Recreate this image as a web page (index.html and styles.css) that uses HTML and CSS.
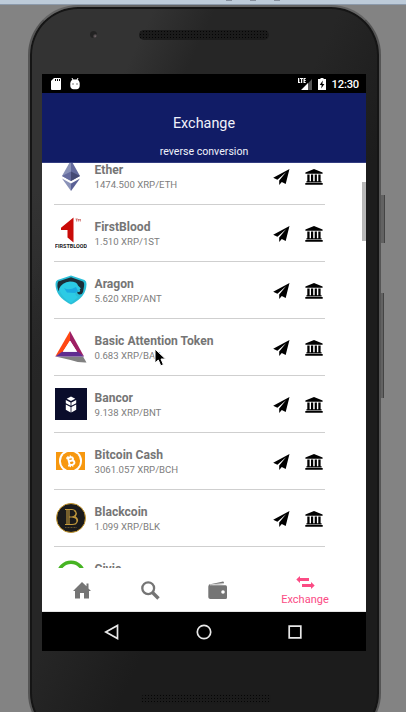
FILE: index.html
```html
<!DOCTYPE html>
<html lang="en">
<head>
<meta charset="utf-8">
<title>Exchange</title>
<link rel="stylesheet" href="styles.css">
</head>
<body>
<svg class="defs" width="0" height="0">
  <symbol id="plane" viewBox="0 0 17 16"><path d="M16.5 0 .2 8.8l4.2 2L13 3.2 6.2 11.600V16l2.600-3 3.900 2z"/></symbol>
  <symbol id="bank" viewBox="0 0 18 16"><path d="M9 0 .4 3.600v1.200h17.200V3.600zM2.300 5.600h2.300v6.700H2.300zM6 5.600h2.200v6.700H6zM9.700 5.600h2.200v6.700H9.700zM13.300 5.600h2.300v6.700h-2.300zM1.400 12.200h15.200v1.200H1.400zM.3 14.100h17.400v1.700H.3z"/></symbol>
</svg>
<div class="window-edge"><i></i><i></i><i></i></div>
<div class="phone">
  <div class="bezel-top"><span class="camera"></span><span class="speaker"></span></div>
  <div class="screen">
    <div class="status">
      <svg width="10" height="12" viewBox="0 0 10 12"><path fill="#fff" d="M3 0h6q1 0 1 1v10q0 1-1 1H1q-1 0-1-1V3z"/><path stroke="#000" d="M4.500 1v2M6.500 1v2M8.500 1v2"/></svg>
      <svg class="droid" width="10" height="12" viewBox="0 0 10 12"><path fill="#fff" d="M.3 5Q.5 2 3 1.500h4Q9.500 2 9.700 5v3Q9.500 11 6.500 11.300h-3Q.5 11 .3 8z"/><path stroke="#fff" d="m2 0 1 2m5-2L7 2"/><path fill="#000" d="M2.500 5.500h1v1h-1zM6.500 5.500h1v1h-1z"/></svg>
      <span class="grow"></span>
      <svg class="signal" width="15" height="12" viewBox="0 0 15 12"><path fill="#555" d="M14 1v11H4z"/><path fill="#fff" d="M10 5V12H3zM0 0h1.300v4h1v1H0zM2 0h3v1H4.200v4H3V1H2zM5.500 0H7.700v1h-1v1h1v1h-1v1h1v1h-2.200z"/></svg>
      <svg class="battery" width="8" height="12" viewBox="0 0 8 12"><path fill="#fff" d="M2.500 0h3v1H8v11H0V1h2.500z"/><path d="M4.800 2.500 1.700 7h2l-.5 3.500L6.400 6h-2z"/></svg>
      <span class="clock">12:30</span>
    </div>
    <header class="header"><h1>Exchange</h1><p>reverse conversion</p></header>
    <main class="list">
      <div class="rows">
        <div class="row">
          <svg class="logo" viewBox="0 0 32 32"><path fill="#8a92b8" d="M16 0 7 16l9 5z"/><path fill="#636a9d" d="m16 0 9 16-9 5z"/><path fill="#666c9f" d="m16 11.500-9 4.500 9 5z"/><path fill="#454a75" d="m16 11.500 9 4.500-9 5z"/><path fill="#8a92b8" d="m7 18.500 9 5V31z"/><path fill="#5a6196" d="m25 18.500-9 5V31z"/></svg>
          <div class="text"><b>Ether</b><span>1474.500 XRP/ETH</span></div>
          <svg class="plane"><use href="#plane"/></svg><svg class="bank"><use href="#bank"/></svg>
        </div>
        <div class="row">
          <svg class="logo" viewBox="0 0 32 32"><path fill="#c90b08" d="M18.500.5v25L12.500 20.500V13H6v-2.200z"/><path fill="none" stroke="#c85b58" stroke-width=".8" d="M20.500 2h2.300M21.600 2v2.500M23.300 4.500V2l1 1.200 1-1.200v2.500"/><text class="blood" x="0" y="30.500" textLength="32" lengthAdjust="spacingAndGlyphs">FIRSTBLOOD</text></svg>
          <div class="text"><b>FirstBlood</b><span>1.510 XRP/1ST</span></div>
          <svg class="plane"><use href="#plane"/></svg><svg class="bank"><use href="#bank"/></svg>
        </div>
        <div class="row">
          <svg class="logo" viewBox="0 0 32 32"><path fill="#2bbfd8" d="M16 1.500 29.500 6q2 1 2 4 0 13-15.500 20.500Q.5 23 .5 10q0-3 2-4z"/><path fill="#1c2e38" d="m16 3.200 12 4.300q1.500 1 1 5L28 18q-1 3-4 2.500-2-.6-1.800-3 2.500 1.500 3-1Q25 14 20.500 13 21 9 16 8.500 8 8.500 3.500 17q-2-6-.3-9.500z"/><path fill="#2ccbe5" d="M4 15q3-7 11-7.500 7 0 8 4l3 3-5 2q-2 5 2 6.500L16 29Q7 24 4 15z"/><path fill="#1aa9e2" d="M9 14q5 3 12-1l2 4-3 2-8-.5z"/></svg>
          <div class="text"><b>Aragon</b><span>5.620 XRP/ANT</span></div>
          <svg class="plane"><use href="#plane"/></svg><svg class="bank"><use href="#bank"/></svg>
        </div>
        <div class="row">
          <svg class="logo" viewBox="0 0 32 32"><path fill="#818181" d="M.5 25.500H28l3.500 6q-8 .3-16-2.500z"/><path fill="#ff4713" d="M15 0 .3 25.500l7.200-4L15 9.500z"/><path fill="#9e1f63" d="m15 0 14 25.500-6.500-4L15 9.500z"/><path fill="#602d90" d="M.3 25.500 7 20.800h16L29 25.500z"/><path fill="#fff" d="M15 9.800 7.800 20.800H22z"/></svg>
          <div class="text"><b>Basic Attention Token</b><span>0.683 XRP/BAT</span></div>
          <svg class="plane"><use href="#plane"/></svg><svg class="bank"><use href="#bank"/></svg>
        </div>
        <div class="row">
          <svg class="logo" viewBox="0 0 32 32"><path fill="#0a0d2b" d="M0 0h32v32H0z"/><path fill="#fff" d="m16 8.500 4.300 2.200L16 13l-4.300-2.300zM10.800 12l4.800 2.400v3.300l-4.800-2.500zM21.200 12l-4.800 2.400v3.300l4.800-2.500zM10.800 16.500l4.800 2.400v5.600l-4.800-2.700zM21.200 16.500l-4.800 2.400v5.600l4.800-2.700z"/></svg>
          <div class="text"><b>Bancor</b><span>9.138 XRP/BNT</span></div>
          <svg class="plane"><use href="#plane"/></svg><svg class="bank"><use href="#bank"/></svg>
        </div>
        <div class="row">
          <svg class="logo" viewBox="0 0 32 32"><path fill="#f7980f" d="M1 7h29v18H1z"/><circle cx="15.500" cy="16" r="11.500" fill="#fff"/><circle cx="15.500" cy="16" r="9.600" fill="#f7980f"/><path fill="#fff" d="M1 4h29v3H1zM1 25h29v3H1z"/><g fill="none" stroke="#fff" stroke-width="1.900" transform="rotate(-14 15.500 16)"><path d="M12 12.500h4q2.500 0 2.500 1.700t-2.500 1.700h-2.500 3q2.500 0 2.500 2T16.500 20H12M13.800 12.500V20"/><path stroke-width="1.200" d="M14 10.500v2m2.500-2v2M14 20v2m2.500-2v2"/></g></svg>
          <div class="text"><b>Bitcoin Cash</b><span>3061.057 XRP/BCH</span></div>
          <svg class="plane"><use href="#plane"/></svg><svg class="bank"><use href="#bank"/></svg>
        </div>
        <div class="row">
          <svg class="logo" viewBox="0 0 32 32"><circle cx="16" cy="16" r="14.500" fill="#1b1b1b" stroke="#c8992e"/><path fill="none" stroke="#c49a3c" stroke-width="1.100" d="M10 7.500h7q4 .5 4 3.500t-4 4h-3.500H17q5 .5 5 4t-5 3.500h-7M12 7.500v15M14 7.500v15M19.500 9q3.500 2 .5 5.500 5 3.500.5 7.500"/><path stroke="#75602f" stroke-width=".8" stroke-dasharray="1 .5" d="M10 25.500h12"/></svg>
          <div class="text"><b>Blackcoin</b><span>1.099 XRP/BLK</span></div>
          <svg class="plane"><use href="#plane"/></svg><svg class="bank"><use href="#bank"/></svg>
        </div>
        <div class="row">
          <svg class="logo" viewBox="0 0 32 32"><circle cx="16" cy="16" r="12.700" fill="none" stroke="#46b423" stroke-width="3.600"/></svg>
          <div class="text"><b>Civic</b><span>&nbsp;</span></div>
          <svg class="plane"><use href="#plane"/></svg><svg class="bank"><use href="#bank"/></svg>
        </div>
      </div>
      <span class="scrollbar"></span>
      <svg class="cursor" viewBox="0 0 12 19"><path stroke="#fff" stroke-width="1" d="M1 1v14l3.300-3 2.500 5.800 2.600-1.200L7 11h4.500z"/></svg>
    </main>
    <nav class="tabs">
      <svg width="18" height="17" viewBox="0 0 18 17"><path d="M9 0 0 9h2v7.500h5V11h4v5.500h5V9h2l-2.500-2.600V1.500h-2v2.800z"/></svg>
      <svg width="19" height="19" viewBox="0 0 19 19"><circle cx="7.200" cy="7.200" r="5.900" fill="none" stroke="#757575" stroke-width="2.300"/><path fill="none" stroke="#757575" stroke-width="3.300" d="m11.500 11.500 6 6"/></svg>
      <svg width="20" height="19" viewBox="0 0 20 19"><path d="M1 3.500 14 .7q2-.5 2 1.300v1L3 4.200h14.500Q19 4.300 19 6v10.500q0 1.500-1.500 1.500H2.300Q.5 18 .3 16.300V5.500z"/><path fill="none" stroke="#fff" stroke-width=".7" d="M2 3.900 16 2.500"/><circle cx="15" cy="11" r="1.800" fill="#fff"/></svg>
      <div class="active"><svg width="19" height="13" viewBox="0 0 19 13"><path d="M4 0v2h9v3H4v2L.3 3.500zM15 6v2H6v3h9v2l3.700-3.500z"/></svg><span>Exchange</span></div>
    </nav>
    <div class="sysnav">
      <svg width="16" height="16" viewBox="0 0 16 16"><path d="M13.500 1.500v13L1.800 8z"/></svg>
      <svg width="16" height="16" viewBox="0 0 16 16"><circle cx="8" cy="8" r="6.700"/></svg>
      <svg width="16" height="16" viewBox="0 0 16 16"><path d="M2.200 2.200h11.600v11.600H2.200z"/></svg>
    </div>
  </div>
  <div class="bezel-bottom"><span class="speaker"></span></div>
  <span class="key power"></span><span class="key volume"></span>
</div>
</body>
</html>
```
FILE: styles.css
```css
* { box-sizing: border-box; }
body { margin: 0; width: 406px; height: 712px; overflow: hidden; background: #838383; font-family: Roboto, sans-serif; }
.defs { position: absolute; }
svg { display: block; flex: none; }
.window-edge { height: 5px; background: #bdcbd9; border-bottom: 1px solid #8c9aab; display: flex; gap: 18px; padding-left: 226px; }
.window-edge i { width: 6px; height: 1px; background: #858e9c; }
.phone { position: relative; width: 353px; height: 738px; margin: 0 0 0 28px; border-radius: 50px; border: 2px solid #555; border-top-color: #646464; box-shadow: inset 0 0 0 2px #151515; background: linear-gradient(115deg, transparent 0, transparent 18%, #262626 27%, #262626 45%, #1c1c1c 60%), linear-gradient(#333 0, #333 25%, #1c1c1c 75%); padding: 0 13px 0 12px; }
.bezel-top { height: 67px; display: flex; align-items: flex-start; padding: 23px 0 0 48px; }
.camera { width: 7px; height: 7px; margin-top: 1px; border-radius: 50%; background: radial-gradient(circle at 75% 75%, #776b70 0, #222 35%); }
.speaker { width: 130px; height: 10px; border-radius: 5px; background: radial-gradient(circle, #050505 35%, transparent 45%) 0 0 / 3px 3px, #1b1b1b; }
.bezel-top .speaker { margin-left: 42px; }
.screen { width: 324px; height: 577px; background: #fff; display: flex; flex-direction: column; }
.status { height: 19px; background: #000; display: flex; align-items: center; padding: 0 7px 0 9px; color: #fff; }
.droid { margin-left: 9px; }
.grow { flex: 1; }
.battery { margin: 0 6px 0 5px; }
.clock { font-size: 11.200px; font-weight: 500; line-height: 19px; letter-spacing: -.2px; padding-top: 1px; }
.header { height: 70px; background: #111c66; color: #f0f2fa; text-align: center; border-bottom: 1px solid #323c80; }
.header h1 { margin: 0; padding-top: 22px; font-size: 14.400px; line-height: 18px; font-weight: 400; }
.header p { margin: 12px 0 0; font-size: 10.600px; line-height: 14px; }
.list { position: relative; height: 405px; overflow: hidden; }
.rows { margin-top: -15px; }
.row { height: 57px; width: 271px; margin-left: 12px; border-bottom: 1px solid #cfcfcf; display: flex; align-items: center; }
.logo { width: 32px; height: 32px; margin-left: 1px; }
.text { flex: 1; margin-left: 7.500px; padding-top: 1px; display: flex; flex-direction: column; color: #757575; white-space: nowrap; }
.text b { font-size: 12.100px; line-height: 15px; font-weight: 700; }
.text span { font-size: 9.600px; line-height: 13px; color: #7d7d7d; }
.blood { font: 700 5px Roboto, sans-serif; fill: #222; }
.plane { width: 17px; height: 16px; margin: 1px 15px 0 0; }
.bank { width: 18px; height: 16px; margin: 1px 2px 0 0; }
.scrollbar { position: absolute; right: 0; top: 19px; width: 4px; height: 59px; background: #b8b8b8; }
.cursor { position: absolute; left: 111.500px; top: 185px; width: 12px; height: 19px; }
.tabs { height: 44px; border-bottom: 1px solid #e4e4e4; display: grid; grid-template-columns: 80px 57px 78px 96px; align-items: center; justify-items: center; fill: #757575; padding-top: 1px; }
.active { fill: #fb4b84; color: #fb4b84; display: flex; flex-direction: column; align-items: center; padding-top: 2px; }
.active span { font-size: 11px; line-height: 14px; margin-top: 4px; }
.sysnav { height: 39px; background: #000; display: flex; align-items: center; justify-content: space-between; padding: 0 63px 0 62px; fill: none; stroke: #e8e8e8; stroke-width: 1.700; }
.bezel-bottom { padding: 43px 0 0 99px; }
.bezel-bottom .speaker { display: block; }
.key { position: absolute; left: 351px; width: 4px; background: #626262; border-right: 1px solid #444; }
.power { top: 188px; height: 48px; }
.volume { top: 286px; width: 3px; height: 105px; }
```
